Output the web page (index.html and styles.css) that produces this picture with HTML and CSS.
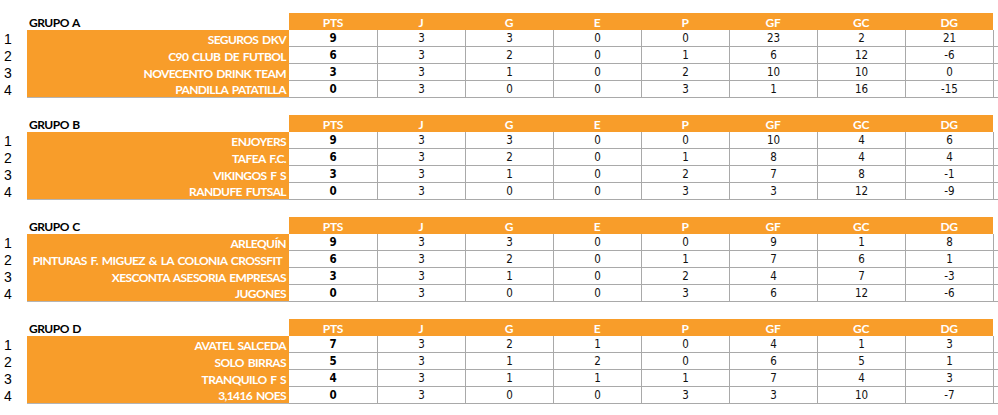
FILE: index.html
```html
<!DOCTYPE html>
<html lang="es">
<head>
<meta charset="utf-8">
<title>Clasificación</title>
<link rel="stylesheet" href="styles.css">
</head>
<body>
<main class="sheet">
  <section class="group">
    <div class="row head"><span class="num"></span><span class="title">GRUPO A</span><span class="h">PTS</span><span class="h">J</span><span class="h">G</span><span class="h">E</span><span class="h">P</span><span class="h">GF</span><span class="h">GC</span><span class="h">DG</span><span class="x"></span></div>
    <div class="row"><span class="num">1</span><span class="name">SEGUROS DKV</span><span class="c b">9</span><span class="c">3</span><span class="c">3</span><span class="c">0</span><span class="c">0</span><span class="c">23</span><span class="c">2</span><span class="c">21</span><span class="c x"></span></div>
    <div class="row"><span class="num">2</span><span class="name">C90 CLUB DE FUTBOL</span><span class="c b">6</span><span class="c">3</span><span class="c">2</span><span class="c">0</span><span class="c">1</span><span class="c">6</span><span class="c">12</span><span class="c">-6</span><span class="c x"></span></div>
    <div class="row"><span class="num">3</span><span class="name">NOVECENTO DRINK TEAM</span><span class="c b">3</span><span class="c">3</span><span class="c">1</span><span class="c">0</span><span class="c">2</span><span class="c">10</span><span class="c">10</span><span class="c">0</span><span class="c x"></span></div>
    <div class="row last"><span class="num">4</span><span class="name">PANDILLA PATATILLA</span><span class="c b">0</span><span class="c">3</span><span class="c">0</span><span class="c">0</span><span class="c">3</span><span class="c">1</span><span class="c">16</span><span class="c">-15</span><span class="c x"></span></div>
  </section>
  <section class="group">
    <div class="row head"><span class="num"></span><span class="title">GRUPO B</span><span class="h">PTS</span><span class="h">J</span><span class="h">G</span><span class="h">E</span><span class="h">P</span><span class="h">GF</span><span class="h">GC</span><span class="h">DG</span><span class="x"></span></div>
    <div class="row"><span class="num">1</span><span class="name">ENJOYERS</span><span class="c b">9</span><span class="c">3</span><span class="c">3</span><span class="c">0</span><span class="c">0</span><span class="c">10</span><span class="c">4</span><span class="c">6</span><span class="c x"></span></div>
    <div class="row"><span class="num">2</span><span class="name">TAFEA F.C.</span><span class="c b">6</span><span class="c">3</span><span class="c">2</span><span class="c">0</span><span class="c">1</span><span class="c">8</span><span class="c">4</span><span class="c">4</span><span class="c x"></span></div>
    <div class="row"><span class="num">3</span><span class="name">VIKINGOS F S</span><span class="c b">3</span><span class="c">3</span><span class="c">1</span><span class="c">0</span><span class="c">2</span><span class="c">7</span><span class="c">8</span><span class="c">-1</span><span class="c x"></span></div>
    <div class="row last"><span class="num">4</span><span class="name">RANDUFE FUTSAL</span><span class="c b">0</span><span class="c">3</span><span class="c">0</span><span class="c">0</span><span class="c">3</span><span class="c">3</span><span class="c">12</span><span class="c">-9</span><span class="c x"></span></div>
  </section>
  <section class="group">
    <div class="row head"><span class="num"></span><span class="title">GRUPO C</span><span class="h">PTS</span><span class="h">J</span><span class="h">G</span><span class="h">E</span><span class="h">P</span><span class="h">GF</span><span class="h">GC</span><span class="h">DG</span><span class="x"></span></div>
    <div class="row"><span class="num">1</span><span class="name">ARLEQUÍN</span><span class="c b">9</span><span class="c">3</span><span class="c">3</span><span class="c">0</span><span class="c">0</span><span class="c">9</span><span class="c">1</span><span class="c">8</span><span class="c x"></span></div>
    <div class="row"><span class="num">2</span><span class="name pad">PINTURAS F. MIGUEZ &amp; LA COLONIA CROSSFIT</span><span class="c b">6</span><span class="c">3</span><span class="c">2</span><span class="c">0</span><span class="c">1</span><span class="c">7</span><span class="c">6</span><span class="c">1</span><span class="c x"></span></div>
    <div class="row"><span class="num">3</span><span class="name">XESCONTA ASESORIA EMPRESAS</span><span class="c b">3</span><span class="c">3</span><span class="c">1</span><span class="c">0</span><span class="c">2</span><span class="c">4</span><span class="c">7</span><span class="c">-3</span><span class="c x"></span></div>
    <div class="row last"><span class="num">4</span><span class="name">JUGONES</span><span class="c b">0</span><span class="c">3</span><span class="c">0</span><span class="c">0</span><span class="c">3</span><span class="c">6</span><span class="c">12</span><span class="c">-6</span><span class="c x"></span></div>
  </section>
  <section class="group">
    <div class="row head"><span class="num"></span><span class="title">GRUPO D</span><span class="h">PTS</span><span class="h">J</span><span class="h">G</span><span class="h">E</span><span class="h">P</span><span class="h">GF</span><span class="h">GC</span><span class="h">DG</span><span class="x"></span></div>
    <div class="row"><span class="num">1</span><span class="name">AVATEL SALCEDA</span><span class="c b">7</span><span class="c">3</span><span class="c">2</span><span class="c">1</span><span class="c">0</span><span class="c">4</span><span class="c">1</span><span class="c">3</span><span class="c x"></span></div>
    <div class="row"><span class="num">2</span><span class="name">SOLO BIRRAS</span><span class="c b">5</span><span class="c">3</span><span class="c">1</span><span class="c">2</span><span class="c">0</span><span class="c">6</span><span class="c">5</span><span class="c">1</span><span class="c x"></span></div>
    <div class="row"><span class="num">3</span><span class="name">TRANQUILO F S</span><span class="c b">4</span><span class="c">3</span><span class="c">1</span><span class="c">1</span><span class="c">1</span><span class="c">7</span><span class="c">4</span><span class="c">3</span><span class="c x"></span></div>
    <div class="row last"><span class="num">4</span><span class="name">3,1416 NOES</span><span class="c b">0</span><span class="c">3</span><span class="c">0</span><span class="c">0</span><span class="c">3</span><span class="c">3</span><span class="c">10</span><span class="c">-7</span><span class="c x"></span></div>
  </section>
</main>
</body>
</html>
```
FILE: styles.css
```css
html, body {
  margin: 0;
  padding: 0;
  background: #ffffff;
}

.sheet {
  padding-top: 13px;
  display: flex;
  flex-direction: column;
  gap: 17px;
  width: 998px;
  overflow: hidden;
}

.group {
  display: flex;
  flex-direction: column;
}

.row {
  display: grid;
  grid-template-columns: 27px 262px repeat(8, 88px) 1fr;
  height: 17px;
}

.row > span {
  box-sizing: border-box;
  display: flex;
  align-items: center;
  white-space: nowrap;
  overflow: hidden;
}

.num {
  font-family: "Liberation Sans", Arial, sans-serif;
  font-size: 14px;
  color: #000;
  padding-left: 4px;
}

.title {
  font-family: Lato, "Liberation Sans", sans-serif;
  font-weight: 700;
  font-size: 12px;
  letter-spacing: -0.5px;
  word-spacing: 1px;
  color: #000;
  padding-left: 2px;
  padding-top: 1px;
}

.h {
  background: #f89d2a;
  color: #fff;
  font-family: Lato, "Liberation Sans", sans-serif;
  font-weight: 700;
  font-size: 12px;
  letter-spacing: -0.3px;
  justify-content: center;
  padding-top: 1px;
}

.name {
  background: #f89d2a;
  color: #fff;
  font-family: Lato, "Liberation Sans", sans-serif;
  font-weight: 700;
  font-size: 12px;
  letter-spacing: -0.6px;
  word-spacing: 1.5px;
  justify-content: flex-end;
  padding-right: 3px;
  padding-top: 1px;
}

.name.pad {
  padding-right: 7px;
}

.last .name {
  border-bottom: 1px solid #b4b4b4;
}

.c {
  font-family: "DejaVu Sans Condensed", "DejaVu Sans", sans-serif;
  font-size: 11.5px;
  color: #111;
  justify-content: center;
  border-bottom: 1px solid #a9a9a9;
}

.c + .c {
  border-left: 1px solid #a9a9a9;
}

.c.b {
  font-weight: 700;
  color: #000;
}
```
